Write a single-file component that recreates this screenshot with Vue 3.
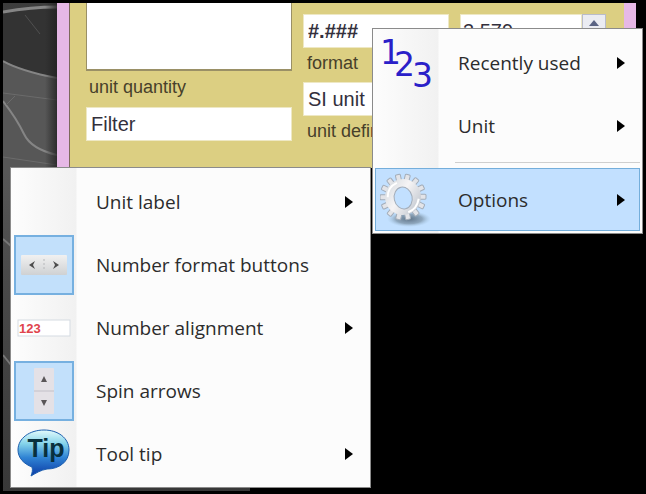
<script setup>
import { ref } from 'vue'

const format = ref('#.###')
const definition = ref('SI unit')
const value = ref('3.579')
const filter = ref('Filter')

const mainItems = [
  { label: 'Recently used', icon: 'digits', sub: true },
  { label: 'Unit', sub: true },
  { label: 'Options', icon: 'gear', sub: true, active: true },
]
const options = ref([
  { label: 'Unit label', sub: true },
  { label: 'Number format buttons', icon: 'format', checked: true },
  { label: 'Number alignment', icon: 'align', sub: true },
  { label: 'Spin arrows', icon: 'spin', checked: true },
  { label: 'Tool tip', icon: 'tip', sub: true },
])
const teeth = Array.from({ length: 14 }, (_, i) => (i * 360) / 14)

function toggle(item) {
  if ('checked' in item) item.checked = !item.checked
}
</script>

<template>
  <main class="desktop">
    <svg class="leaf" viewBox="0 0 247 488" preserveAspectRatio="none" aria-hidden="true">
      <defs>
        <linearGradient id="leafBase" x1="0" y1="0" x2="0" y2="1">
          <stop offset="0" stop-color="#3c3c3c" />
          <stop offset="0.3" stop-color="#5a5a5a" />
          <stop offset="0.55" stop-color="#4a4a4a" />
          <stop offset="1" stop-color="#383838" />
        </linearGradient>
        <linearGradient id="leafEdge">
          <stop offset="0" stop-color="#222" stop-opacity="0" />
          <stop offset="1" stop-color="#222" stop-opacity="0.8" />
        </linearGradient>
      </defs>
      <rect width="247" height="488" fill="url(#leafBase)" />
      <path d="M0 10 54 4V75Q25 70 0 58Z" fill="#333" />
      <path d="M0 58Q25 70 54 75V170H0Z" fill="#575757" />
      <g fill="none" stroke="#858585">
        <path d="M0 9Q28 4 54 4" stroke-width="3" />
        <path d="M0 58Q18 68 54 75" stroke-width="2" />
        <path d="M0 98Q14 116 21 131T54 152" stroke-width="2" />
        <path d="M22 12 37 31" stroke="#505050" />
        <path d="M0 90 54 97M0 154 54 162M12 93 3 102" stroke="#6b6b6b" />
        <path d="M0 236 8 243M0 352 8 362" stroke="#777" stroke-width="2" />
      </g>
      <rect x="42" width="12" height="170" fill="url(#leafEdge)" />
    </svg>

    <section class="panel">
      <div class="col wide">
        <div class="list" role="listbox" aria-labelledby="quantity"></div>
        <span id="quantity" class="caption">unit quantity</span>
        <input v-model="filter" class="field filter" aria-label="Filter" />
      </div>
      <div class="col mid">
        <input id="format" v-model="format" class="field strong" />
        <label for="format" class="caption">format</label>
        <input id="definition" v-model="definition" class="field" />
        <label for="definition" class="caption">unit definition</label>
      </div>
      <div class="col mid">
        <div class="spinner">
          <input v-model="value" class="field" aria-label="Value" />
          <button class="up" type="button" aria-label="Increase">
            <svg width="10" height="6" viewBox="0 0 10 6"><path d="M5 0 10 6H0Z" fill="#5b6484" /></svg>
          </button>
        </div>
      </div>
    </section>

    <nav class="menu main-menu" role="menu" aria-label="Number box">
      <template v-for="item in mainItems" :key="item.label">
        <hr v-if="item.active" class="rule" />
        <button class="item" :class="{ active: item.active }" type="button" role="menuitem">
          <span class="icon">
            <svg v-if="item.icon === 'digits'" class="digits" width="58" height="58" viewBox="0 0 58 58" aria-hidden="true">
              <text x="3" y="30">1</text>
              <text x="17" y="42">2</text>
              <text x="35" y="53">3</text>
            </svg>
            <svg v-if="item.icon === 'gear'" width="52" height="58" viewBox="0 0 52 58" aria-hidden="true">
              <defs>
                <linearGradient id="metal" x1="0" y1="0" x2="1" y2="1">
                  <stop offset="0" stop-color="#cfd6dc" />
                  <stop offset="0.45" stop-color="#f6f4f5" />
                  <stop offset="1" stop-color="#b4bcc6" />
                </linearGradient>
                <radialGradient id="shade">
                  <stop offset="0" stop-color="#5f7488" />
                  <stop offset="0.6" stop-color="#8198ac" stop-opacity="0.8" />
                  <stop offset="1" stop-color="#a9c8e2" stop-opacity="0" />
                </radialGradient>
              </defs>
              <ellipse cx="29" cy="48" rx="22" ry="8" fill="url(#shade)" />
              <g transform="rotate(-12 23 26)">
                <g fill="#e3e4e8" stroke="#a3adb9" stroke-width="1">
                  <rect v-for="a in teeth" :key="a" x="20" y="3" width="5" height="9" rx="1" :transform="`rotate(${a} 23 26)`" />
                </g>
                <path fill-rule="evenodd" d="M23 8a18 18 0 1 0 0 36 18 18 0 1 0 0-36ZM23 16a9 11 0 1 1 0 22 9 11 0 1 1 0-22Z" fill="url(#metal)" />
                <ellipse cx="23" cy="27" rx="9" ry="11" fill="none" stroke="#a3adb9" stroke-width="1" />
                <path d="M8 23Q10 13 20 11M38 31Q34 41 25 42" fill="none" stroke="#fff" stroke-width="2" />
              </g>
            </svg>
          </span>
          <span class="text">{{ item.label }}</span>
          <svg class="arrow" width="8" height="12" viewBox="0 0 8 12" aria-hidden="true"><path d="M0 0 8 6 0 12Z" /></svg>
        </button>
      </template>
    </nav>

    <nav class="menu sub-menu" role="menu" aria-label="Options">
      <button
        v-for="item in options"
        :key="item.label"
        class="item"
        type="button"
        :role="'checked' in item ? 'menuitemcheckbox' : 'menuitem'"
        :aria-checked="item.checked"
        @click="toggle(item)"
      >
        <span class="icon" :class="{ checked: item.checked }">
          <svg v-if="item.icon === 'format'" width="46" height="20" viewBox="0 0 46 20" aria-hidden="true">
            <defs>
              <linearGradient id="face" x1="0" y1="0" x2="0" y2="1">
                <stop offset="0" stop-color="#f1f1f1" />
                <stop offset="1" stop-color="#cfd1d3" />
              </linearGradient>
            </defs>
            <rect width="46" height="20" rx="1" fill="url(#face)" />
            <path d="M23 4V16" stroke="#b6b8ba" stroke-dasharray="2 2" />
            <path d="M14 6 12 10 14 14 8 10ZM32 6 34 10 32 14 38 10Z" fill="#4c4c4c" />
          </svg>
          <svg v-if="item.icon === 'align'" class="align" width="56" height="20" viewBox="0 0 56 20" aria-hidden="true">
            <rect x="2" y="2" width="52" height="16" fill="#fff" stroke="#d5dbe2" />
            <text x="3" y="15">123</text>
          </svg>
          <svg v-if="item.icon === 'spin'" width="20" height="46" viewBox="0 0 20 46" aria-hidden="true">
            <rect width="20" height="46" rx="1" fill="#e4e1e6" />
            <path d="M0 23H20" stroke="#c2c0c8" />
            <path d="M10 8 13 14H7ZM10 38 13 32H7Z" fill="#5a5658" />
          </svg>
          <svg v-if="item.icon === 'tip'" class="tip" width="56" height="50" viewBox="0 0 56 50" aria-hidden="true">
            <defs>
              <linearGradient id="bubble" x1="0" y1="0" x2="0" y2="1">
                <stop offset="0" stop-color="#e4fbfc" />
                <stop offset="0.3" stop-color="#84d3ea" />
                <stop offset="0.6" stop-color="#2f83d4" />
                <stop offset="1" stop-color="#0b3aa6" />
              </linearGradient>
            </defs>
            <path d="M28 1C42 1 53 9 53 21S43 40 31 40C25 41 20 44 15 47 16 44 17 41 16 38 8 35 2 29 2 21 2 9 14 1 28 1Z" fill="url(#bubble)" stroke="#1d5fae" stroke-width="1" />
            <text x="30" y="28">Tip</text>
          </svg>
        </span>
        <span class="text">{{ item.label }}</span>
        <svg v-if="item.sub" class="arrow" width="8" height="12" viewBox="0 0 8 12" aria-hidden="true"><path d="M0 0 8 6 0 12Z" /></svg>
      </button>
    </nav>
  </main>
</template>

<style>
body {
  margin: 0;
  background: #000;
}
</style>

<style scoped>
* {
  box-sizing: border-box;
}
.desktop {
  position: relative;
  min-height: 100vh;
  padding: 3px 10px 0 57px;
  overflow: hidden;
  background: #000;
  font-family: "Liberation Sans", Arial, sans-serif;
}
.leaf {
  position: absolute;
  top: 3px;
  left: 3px;
  width: 247px;
  height: calc(100% - 6px);
}
.panel {
  position: relative;
  display: flex;
  gap: 11px;
  min-height: 165px;
  padding: 0 18px 0 17px;
  background: #dccf82;
  border: solid #e6b8e6;
  border-width: 0 12px;
  box-shadow: inset 1px 0 #7d6a5c;
}
.col {
  display: flex;
  flex-direction: column;
}
.wide {
  flex: 206;
  min-width: 0;
}
.mid {
  flex: 146;
  min-width: 0;
  padding-top: 11px;
}
.list {
  height: 68px;
  background: #fff;
  border: solid #9a9066;
  border-width: 0 1px 2px;
}
.caption {
  padding-left: 3px;
  color: #47402a;
  font-size: 18px;
  line-height: 32px;
}
.mid .caption {
  padding-left: 4px;
  line-height: 30px;
}
.mid .caption + .field {
  margin-top: 4px;
}
.field {
  width: 100%;
  height: 34px;
  padding: 0 4px;
  border: 1px solid #eee8c4;
  border-radius: 0;
  background: #fff;
  color: #33303c;
  font: 20px "Liberation Sans", Arial, sans-serif;
  outline: none;
}
.filter {
  margin-top: 4px;
}
.strong {
  font-weight: bold;
}
.spinner {
  display: flex;
  height: 34px;
  background: #fff;
}
.spinner .field {
  flex: 1;
  min-width: 0;
  padding: 0 2px;
}
.up {
  display: flex;
  justify-content: center;
  width: 24px;
  height: 17px;
  padding: 5px 0 0;
  border: 1px solid #b9bccb;
  background: #ebecf2;
}
.menu {
  position: absolute;
  padding: 2px;
  border: 1px solid #8b8b8b;
  background: linear-gradient(90deg, #fdfdfd, #f1f1f1 65px, #fcfcfc 66px);
}
.main-menu {
  top: 28px;
  left: 372px;
  width: 271px;
}
.sub-menu {
  top: 167px;
  left: 10px;
  width: 361px;
}
.item {
  display: flex;
  align-items: center;
  width: 100%;
  height: 63px;
  padding: 0 14px 0 0;
  border: 1px solid transparent;
  background: none;
  color: #2c2c2c;
  font: 19px "Open Sans", "Segoe UI", sans-serif;
  text-align: left;
}
.item.active {
  border-color: #74aedb;
  background: #c2e0ff;
}
.icon {
  display: flex;
  align-items: center;
  justify-content: center;
  width: 60px;
  height: 60px;
  border: 1px solid transparent;
}
.icon.checked {
  border: 2px solid #76b0e0;
  background: #c2e0fb;
}
.text {
  flex: 1;
  padding-left: 22px;
  white-space: nowrap;
}
.arrow {
  fill: #000;
}
.rule {
  height: 1px;
  margin: 5px 0 5px 80px;
  border: 0;
  background: #cfcfcf;
}
.digits {
  overflow: visible;
}
.digits text {
  fill: #2a20c8;
  font: 33px "DejaVu Sans", sans-serif;
}
.align text {
  fill: #e0444c;
  font: bold 13px "Liberation Sans", sans-serif;
}
.tip text {
  fill: #08303e;
  font: bold 25px "Liberation Sans", sans-serif;
  text-anchor: middle;
}
</style>
